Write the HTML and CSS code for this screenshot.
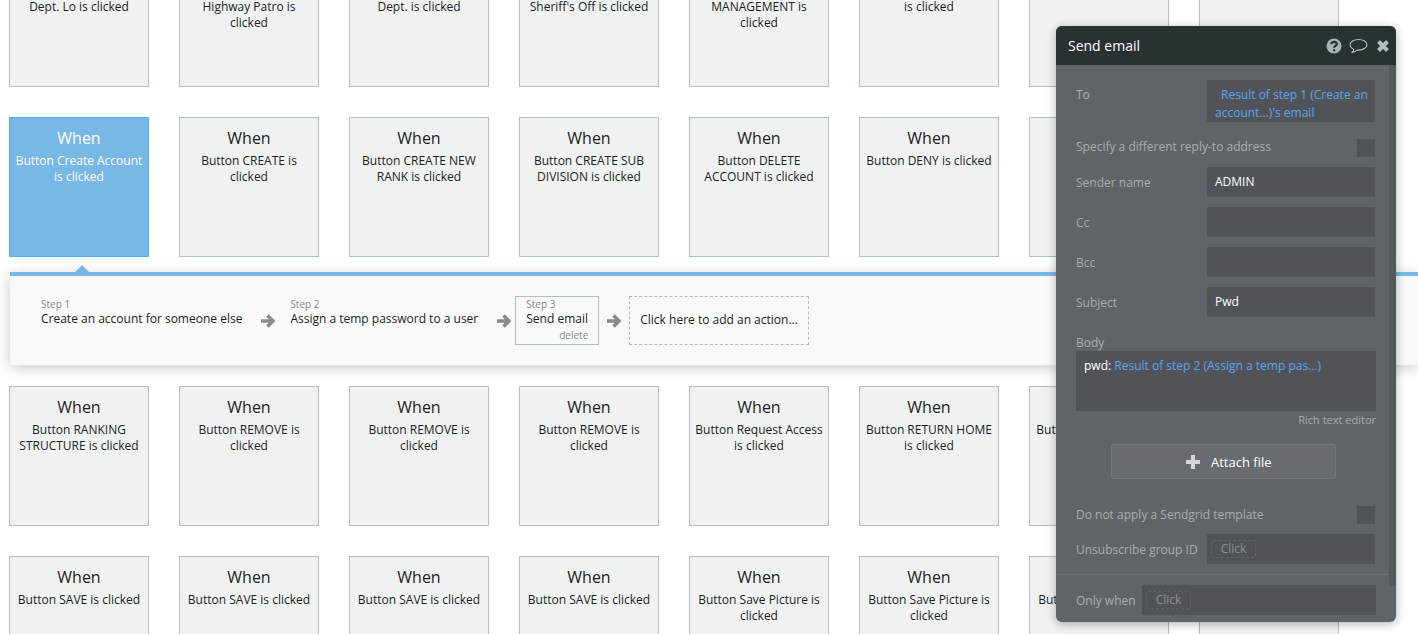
FILE: index.html
```html
<!DOCTYPE html>
<html lang="en">
<head>
<meta charset="utf-8">
<title>Workflow editor</title>
<link rel="stylesheet" href="styles.css">
</head>
<body>
<main class="board">
  <section class="grid">
    <div class="card"><h3>When</h3><p>Button Police<br>Dept. Lo is clicked</p></div>
    <div class="card"><h3>When</h3><p>Button State<br>Highway Patro is<br>clicked</p></div>
    <div class="card"><h3>When</h3><p>Button Fire<br>Dept. is clicked</p></div>
    <div class="card"><h3>When</h3><p>Button County<br>Sheriff's Off is clicked</p></div>
    <div class="card"><h3>When</h3><p>Button USER<br>MANAGEMENT is<br>clicked</p></div>
    <div class="card"><h3>When</h3><p>Button ACCOUNTS<br>is clicked</p></div>
    <div class="card"><h3>When</h3><p>Button is clicked</p></div>
    <div class="card"><h3>When</h3><p>Button is clicked</p></div>

    <div class="card selected"><h3>When</h3><p>Button Create Account is clicked</p></div>
    <div class="card"><h3>When</h3><p>Button CREATE is clicked</p></div>
    <div class="card"><h3>When</h3><p>Button CREATE NEW RANK is clicked</p></div>
    <div class="card"><h3>When</h3><p>Button CREATE SUB DIVISION is clicked</p></div>
    <div class="card"><h3>When</h3><p>Button DELETE ACCOUNT is clicked</p></div>
    <div class="card"><h3>When</h3><p>Button DENY is clicked</p></div>
    <div class="card"><h3>When</h3><p>Button ENABLE<br>RANK is clicked</p></div>
    <div class="card"><h3>When</h3><p>Button EDIT is clicked</p></div>
  </section>

  <section class="steps">
    <span class="pointer"></span>
    <div class="step step-one"><small>Step 1</small><span>Create an account for someone else</span></div>
    <svg class="arrow arrow-tight" viewBox="0 0 14 14"><path d="M0 7H12M6.500 1.500 12 7 6.500 12.500"/></svg>
    <div class="step step-two"><small>Step 2</small><span>Assign a temp password to a user</span></div>
    <svg class="arrow arrow-tight" viewBox="0 0 14 14"><path d="M0 7H12M6.500 1.500 12 7 6.500 12.500"/></svg>
    <div class="step step-current"><small>Step 3</small><span>Send email</span><em>delete</em></div>
    <svg class="arrow" viewBox="0 0 14 14"><path d="M0 7H12M6.500 1.500 12 7 6.500 12.500"/></svg>
    <div class="step-add">Click here to add an action...</div>
  </section>

  <section class="grid grid-lower">
    <div class="card"><h3>When</h3><p>Button RANKING STRUCTURE is clicked</p></div>
    <div class="card"><h3>When</h3><p>Button REMOVE is clicked</p></div>
    <div class="card"><h3>When</h3><p>Button REMOVE is clicked</p></div>
    <div class="card"><h3>When</h3><p>Button REMOVE is clicked</p></div>
    <div class="card"><h3>When</h3><p>Button Request Access is clicked</p></div>
    <div class="card"><h3>When</h3><p>Button RETURN HOME is clicked</p></div>
    <div class="card"><h3>When</h3><p>Button RETURN TOP is clicked</p></div>
    <div class="card"><h3>When</h3><p>Button SAVE is clicked</p></div>

    <div class="card"><h3>When</h3><p>Button SAVE is clicked</p></div>
    <div class="card"><h3>When</h3><p>Button SAVE is clicked</p></div>
    <div class="card"><h3>When</h3><p>Button SAVE is clicked</p></div>
    <div class="card"><h3>When</h3><p>Button SAVE is clicked</p></div>
    <div class="card"><h3>When</h3><p>Button Save Picture is clicked</p></div>
    <div class="card"><h3>When</h3><p>Button Save Picture is clicked</p></div>
    <div class="card"><h3>When</h3><p>Button Save Picture is clicked</p></div>
    <div class="card"><h3>When</h3><p>Button SAVE is clicked</p></div>
  </section>
</main>

<aside class="editor">
  <header class="editor-head">
    <h2>Send email</h2>
    <div class="editor-icons">
      <svg class="icon-help" viewBox="0 0 16 16"><circle cx="8" cy="8" r="7.5"/><path d="M5.300 6.300C5.400 4.600 6.600 3.800 8.100 3.800 9.700 3.800 10.800 4.800 10.800 6.100 10.800 7.900 8.100 8 8.100 9.800M8.100 11.200V13.200"/></svg>
      <svg class="icon-chat" viewBox="0 0 19 16"><path d="M9.500 1.500C4.800 1.500 1 3.800 1 6.800 1 8.700 2.500 10.300 4.800 11.200 4.600 12.500 3.900 13.600 3.200 14.400 5 14.200 6.800 13.300 8 12 8.500 12.100 9 12.100 9.500 12.100 14.200 12.100 18 9.700 18 6.800 18 3.800 14.200 1.500 9.500 1.500Z"/></svg>
      <svg class="icon-close" viewBox="0 0 14 14"><path d="M2.500 2.500 11.500 11.500M11.500 2.500 2.500 11.500"/></svg>
    </div>
  </header>
  <div class="editor-body">
    <div class="row row-to">
      <label>To</label>
      <div class="field field-multi"><span class="dyn indent">Result of step 1 (Create an account...)'s email</span></div>
    </div>
    <div class="row row-check">
      <label>Specify a different reply-to address</label>
      <span class="check"></span>
    </div>
    <div class="row row-field">
      <label>Sender name</label>
      <div class="field">ADMIN</div>
    </div>
    <div class="row row-field">
      <label>Cc</label>
      <div class="field"></div>
    </div>
    <div class="row row-field">
      <label>Bcc</label>
      <div class="field"></div>
    </div>
    <div class="row row-field">
      <label>Subject</label>
      <div class="field">Pwd</div>
    </div>
    <label class="body-label">Body</label>
    <div class="body-field">pwd: <span class="dyn">Result of step 2 (Assign a temp pas...)</span></div>
    <div class="rich">Rich text editor</div>
    <button class="attach" type="button">
      <svg viewBox="0 0 14 14"><path d="M7 0V14M0 7H14"/></svg>
      <span>Attach file</span>
    </button>
    <div class="row row-sendgrid">
      <label>Do not apply a Sendgrid template</label>
      <span class="check"></span>
    </div>
    <div class="row row-field">
      <label>Unsubscribe group ID</label>
      <div class="field field-click"><span class="click">Click</span></div>
    </div>
  </div>
  <footer class="editor-foot">
    <label>Only when</label>
    <div class="field field-click field-when"><span class="click">Click</span></div>
  </footer>
  <span class="scrollbar"></span>
</aside>
</body>
</html>
```
FILE: styles.css
```css
* { box-sizing: border-box; }
html, body { height: 100%; }
body {
  margin: 0;
  overflow: hidden;
  background: #fff;
  color: #1b1f22;
  font-family: "Open Sans", "Liberation Sans", sans-serif;
  font-size: 12px;
}

.board { margin-top: -53px; padding-left: 9px; }
.grid {
  display: grid;
  grid-template-columns: repeat(8, 140px);
  column-gap: 30px;
  row-gap: 30px;
}
.grid-lower { margin-top: 21px; }

.card {
  height: 140px;
  padding: 9px 3px 0;
  background: #f0f2f2;
  border: 1px solid #b2bec4;
  text-align: center;
}
.card h3 { margin: 0; font-size: 16px; font-weight: 400; line-height: 22px; }
.card p { margin: 4px 0 0; font-size: 12px; line-height: 16px; }
.selected { background: #78b8e6; border-color: #5cabe2; color: #fff; }

.steps {
  position: relative;
  display: flex;
  align-items: center;
  height: 93px;
  margin: 15px 0 0 1px;
  padding: 20px 0 20px 20px;
  background: #f9f9f9;
  border-top: 4px solid #78b8e6;
  box-shadow: 0 3px 14px rgba(0, 0, 0, .2);
}
.pointer {
  position: absolute;
  left: 65px;
  top: -11px;
  width: 14px;
  height: 7px;
  background: #78b8e6;
  clip-path: polygon(50% 0, 100% 100%, 0 100%);
}
.step {
  display: flex;
  flex-direction: column;
  height: 49px;
  padding: 0 10px;
  border: 1px solid transparent;
  line-height: 15px;
}
.step small { margin-top: 1px; color: #888; font-size: 10px; line-height: 13px; }
.step span { white-space: nowrap; }
.step-current { border-color: #b2bec4; width: 84px; }
.step-current em { margin-top: 3px; color: #8c8c8c; font-size: 10px; font-style: normal; line-height: 13px; text-align: right; }
.arrow {
  flex: none;
  width: 14px;
  height: 14px;
  margin: 0 8px;
  fill: none;
  stroke: #8b8b8b;
  stroke-width: 3.500;
}
.arrow-tight { margin: 0 4px 0 8px; }
.step-add {
  display: flex;
  align-items: center;
  width: 180px;
  height: 49px;
  padding: 0 0 2px 10px;
  border: 1px dashed #b2bec4;
  white-space: nowrap;
}

.editor {
  position: absolute;
  left: 1056px;
  top: 26px;
  width: 340px;
  height: 596px;
  overflow: hidden;
  background: #5f6468;
  border-radius: 6px;
  box-shadow: 0 2px 10px rgba(0, 0, 0, .3);
  color: #a9adaf;
  font-size: 12px;
}
.editor-head {
  display: flex;
  align-items: center;
  justify-content: space-between;
  height: 39px;
  padding: 0 6px 0 12px;
  background: #2a3133;
}
.editor-head h2 { margin: 0; color: #fff; font-size: 14px; font-weight: 400; }
.editor-icons { display: flex; align-items: center; }
.icon-help { width: 16px; height: 16px; }
.icon-help circle { fill: #a9b2b6; }
.icon-help path { fill: none; stroke: #2a3133; stroke-width: 2.200; }
.icon-chat { width: 19px; height: 16px; margin: 0 8px 0 7px; fill: none; stroke: #b7bdc0; stroke-width: 1.100; }
.icon-close { width: 14px; height: 14px; fill: none; stroke: #b4bcbf; stroke-width: 4; }

.editor-body { height: 510px; padding: 15px 21px 0 20px; border-bottom: 1px solid #6c7073; }
.row { display: flex; align-items: center; justify-content: space-between; }
.row label, .editor-foot label { white-space: nowrap; }
.row-field { height: 30px; margin-bottom: 10px; }
.row-to { align-items: flex-start; height: 42px; }
.row-to label { padding-top: 6px; }
.row-check { height: 18px; margin: 17px 0 10px; }
.row-check label { margin-bottom: 4px; }
.field {
  width: 168px;
  height: 30px;
  padding: 0 8px;
  background: #505458;
  color: #fff;
  line-height: 30px;
}
.field-multi { height: 42px; padding: 6px 4px 0 8px; line-height: 18px; }
.dyn { color: #5ea3ee; }
.indent { margin-left: 6px; }
.check { width: 18px; height: 18px; background: #505458; }
.body-label { display: block; margin-top: 17px; line-height: 17px; }
.body-field {
  width: 300px;
  height: 60px;
  padding: 6px 8px;
  background: #505458;
  color: #fff;
  line-height: 18px;
}
.rich { margin-top: 1px; width: 300px; font-size: 11px; line-height: 15px; text-align: right; }
.attach {
  display: flex;
  align-items: center;
  width: 225px;
  height: 35px;
  margin: 17px 0 27px 35px;
  padding: 0 0 0 74px;
  background: #686c70;
  border: 1px solid #74787b;
  border-radius: 3px;
  color: #fff;
  font-family: inherit;
  font-size: 13px;
}
.attach svg { width: 14px; height: 14px; margin-right: 11px; fill: none; stroke: #d6d6d6; stroke-width: 4; }
.row-sendgrid { height: 18px; margin-bottom: 10px; }
.row-sendgrid label { margin-bottom: 2px; }
.field-click { display: flex; align-items: center; padding: 0 0 0 4px; }
.click {
  width: 45px;
  height: 18px;
  border: 1px dashed #5f6468;
  border-radius: 2px;
  color: #8d9193;
  line-height: 16px;
  text-align: center;
}
.editor-foot {
  display: flex;
  align-items: center;
  justify-content: space-between;
  padding: 10px 20px 0;
}
.field-when { width: 234px; }
.scrollbar {
  position: absolute;
  top: 39px;
  right: 0;
  width: 7px;
  height: 521px;
  background: #54595c;
}
```
